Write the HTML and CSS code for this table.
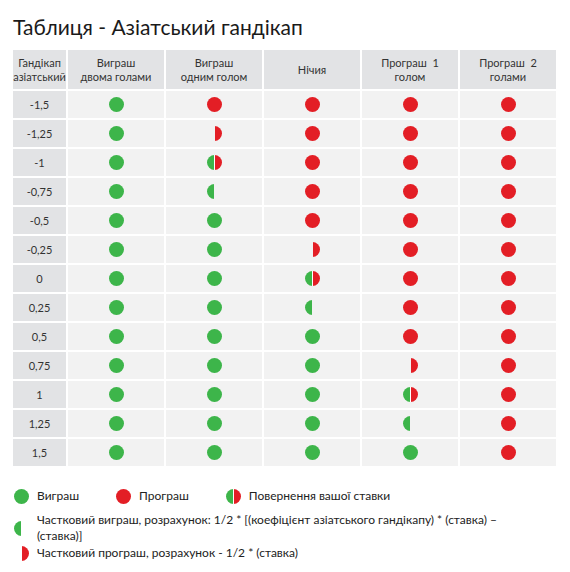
FILE: index.html
```html
<!DOCTYPE html>
<html lang="uk">
<head>
<meta charset="utf-8">
<title>Таблиця - Азіатський гандікап</title>
<link rel="stylesheet" href="styles.css">
</head>
<body>
<div class="page">
  <h1 class="title">Таблиця - Азіатський гандікап</h1>
  <table class="ah">
    <thead>
      <tr>
        <th class="c-first">Гандікап<br>азіатський</th>
        <th>Виграш<br>двома голами</th>
        <th>Виграш<br>одним голом</th>
        <th>Нічия</th>
        <th>Програш&nbsp; 1<br>голом</th>
        <th>Програш&nbsp; 2<br>голами</th>
      </tr>
    </thead>
    <tbody>
      <tr><td class="c-first">-1,5</td><td><span class="dot g"></span></td><td><span class="dot r"></span></td><td><span class="dot r"></span></td><td><span class="dot r"></span></td><td><span class="dot r"></span></td></tr>
      <tr><td class="c-first">-1,25</td><td><span class="dot g"></span></td><td><span class="dot hr"></span></td><td><span class="dot r"></span></td><td><span class="dot r"></span></td><td><span class="dot r"></span></td></tr>
      <tr><td class="c-first">-1</td><td><span class="dot g"></span></td><td><span class="dot gr"></span></td><td><span class="dot r"></span></td><td><span class="dot r"></span></td><td><span class="dot r"></span></td></tr>
      <tr><td class="c-first">-0,75</td><td><span class="dot g"></span></td><td><span class="dot hg"></span></td><td><span class="dot r"></span></td><td><span class="dot r"></span></td><td><span class="dot r"></span></td></tr>
      <tr><td class="c-first">-0,5</td><td><span class="dot g"></span></td><td><span class="dot g"></span></td><td><span class="dot r"></span></td><td><span class="dot r"></span></td><td><span class="dot r"></span></td></tr>
      <tr><td class="c-first">-0,25</td><td><span class="dot g"></span></td><td><span class="dot g"></span></td><td><span class="dot hr"></span></td><td><span class="dot r"></span></td><td><span class="dot r"></span></td></tr>
      <tr><td class="c-first">0</td><td><span class="dot g"></span></td><td><span class="dot g"></span></td><td><span class="dot gr"></span></td><td><span class="dot r"></span></td><td><span class="dot r"></span></td></tr>
      <tr><td class="c-first">0,25</td><td><span class="dot g"></span></td><td><span class="dot g"></span></td><td><span class="dot hg"></span></td><td><span class="dot r"></span></td><td><span class="dot r"></span></td></tr>
      <tr><td class="c-first">0,5</td><td><span class="dot g"></span></td><td><span class="dot g"></span></td><td><span class="dot g"></span></td><td><span class="dot r"></span></td><td><span class="dot r"></span></td></tr>
      <tr><td class="c-first">0,75</td><td><span class="dot g"></span></td><td><span class="dot g"></span></td><td><span class="dot g"></span></td><td><span class="dot hr"></span></td><td><span class="dot r"></span></td></tr>
      <tr><td class="c-first">1</td><td><span class="dot g"></span></td><td><span class="dot g"></span></td><td><span class="dot g"></span></td><td><span class="dot gr"></span></td><td><span class="dot r"></span></td></tr>
      <tr><td class="c-first">1,25</td><td><span class="dot g"></span></td><td><span class="dot g"></span></td><td><span class="dot g"></span></td><td><span class="dot hg"></span></td><td><span class="dot r"></span></td></tr>
      <tr><td class="c-first">1,5</td><td><span class="dot g"></span></td><td><span class="dot g"></span></td><td><span class="dot g"></span></td><td><span class="dot g"></span></td><td><span class="dot r"></span></td></tr>
    </tbody>
  </table>

  <div class="legend">
    <div class="legend-row">
      <div class="legend-item"><span class="dot g"></span><span>Виграш</span></div>
      <div class="legend-item"><span class="dot r"></span><span>Програш</span></div>
      <div class="legend-item"><span class="dot gr"></span><span>Повернення вашої ставки</span></div>
    </div>
    <div class="legend-note">
      <span class="dot hg"></span>
      <span class="note-text">Частковий виграш, розрахунок: 1/2 * [(коефіцієнт азіатського гандікапу) * (ставка) – (ставка)]</span>
    </div>
    <div class="legend-note note-last">
      <span class="dot hr"></span>
      <span class="note-text">Частковий програш, розрахунок - 1/2 * (ставка)</span>
    </div>
  </div>
</div>
</body>
</html>
```
FILE: styles.css
```css
html, body {
  margin: 0;
  padding: 0;
  background: #fff;
}

.page {
  padding: 14px 0 0 13px;
  font-family: Lato, "Noto Sans", sans-serif;
  color: #222;
}

.title {
  margin: 0 0 10px 0;
  font-size: 21px;
  line-height: 26px;
  font-weight: 400;
  color: #1a1a1a;
}

.ah {
  border-collapse: separate;
  border-spacing: 0;
  table-layout: fixed;
  width: 545px;
  font-size: 11px;
  color: #333;
}

.ah th,
.ah td {
  border-right: 2px solid #fff;
  border-bottom: 2px solid #fff;
  padding: 0;
  text-align: center;
  vertical-align: middle;
  width: 96px;
}

.ah th {
  background: #e2e3e5;
  height: 39px;
  line-height: 14px;
  font-weight: 400;
}

.ah td {
  background: #f2f2f2;
  height: 27px;
  line-height: 13px;
}

.ah .c-first {
  width: 53px;
  background: #e2e3e5;
  white-space: nowrap;
  overflow: visible;
}

.ah td .dot {
  vertical-align: middle;
}

.dot {
  display: inline-block;
  width: 15px;
  height: 15px;
  border-radius: 50%;
  flex: none;
}

.dot.g { background: #3db54a; }
.dot.r { background: #e31e25; }
.dot.gr {
  background: linear-gradient(to right, #3db54a 0, #3db54a 7px, #fff 7px, #fff 8px, #e31e25 8px);
}
.dot.hg {
  background: linear-gradient(to right, #3db54a 0, #3db54a 7px, transparent 7px);
}
.dot.hr {
  background: linear-gradient(to right, transparent 0, transparent 8px, #e31e25 8px);
}

.legend {
  margin-top: 19px;
  font-size: 12px;
  color: #222;
}

.legend-row {
  display: flex;
  align-items: center;
  gap: 37px;
  height: 18px;
  padding-left: 1px;
}

.legend-item {
  display: flex;
  align-items: center;
  gap: 8px;
  line-height: 18px;
}

.legend-note {
  display: flex;
  align-items: center;
  gap: 8px;
  padding-left: 1px;
  width: 530px;
  line-height: 16px;
}

.legend-row + .legend-note {
  margin-top: 7px;
}

.note-last {
  margin-top: 1px;
}

.note-text {
  flex: 1;
}
```
